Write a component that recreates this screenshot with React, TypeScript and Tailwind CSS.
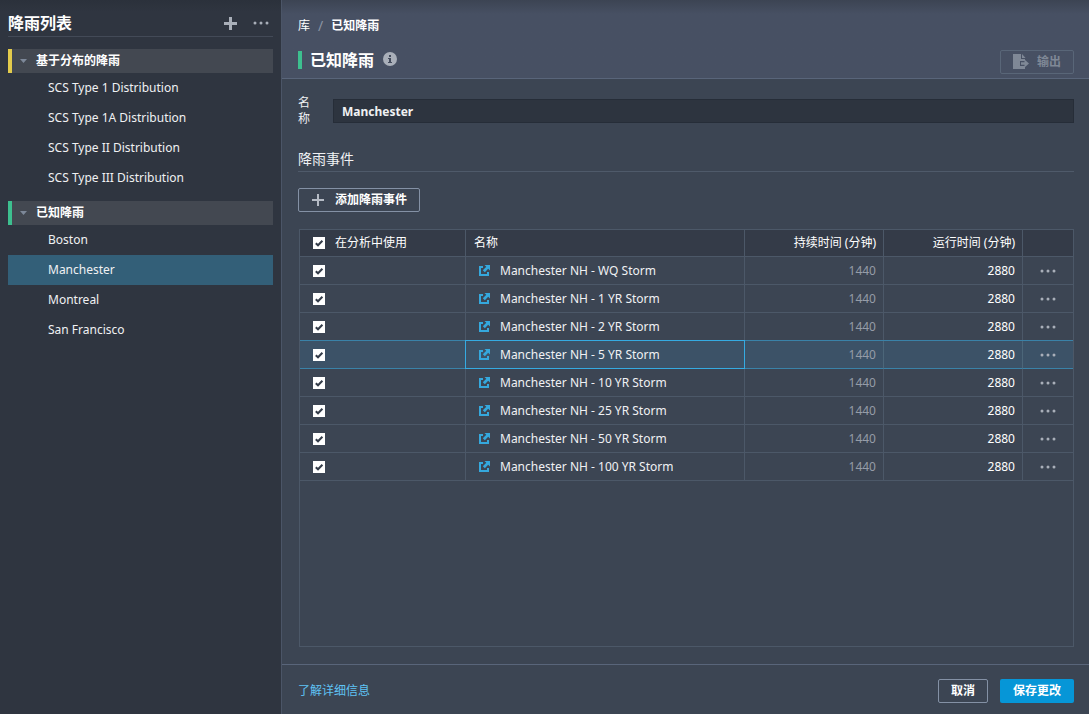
import React, { useState } from "react";

interface RainfallGroup {
  id: string;
  title: string;
  bar: string;
  items: string[];
}

interface RainfallEvent {
  id: number;
  name: string;
  duration: number;
  runtime: number;
}

const groups: RainfallGroup[] = [
  {
    id: "distribution",
    title: "基于分布的降雨",
    bar: "border-[#e3cb4c]",
    items: [
      "SCS Type 1 Distribution",
      "SCS Type 1A Distribution",
      "SCS Type II Distribution",
      "SCS Type III Distribution",
    ],
  },
  {
    id: "known",
    title: "已知降雨",
    bar: "border-[#3dbf8f]",
    items: ["Boston", "Manchester", "Montreal", "San Francisco"],
  },
];

const events: RainfallEvent[] = ["WQ", "1 YR", "2 YR", "5 YR", "10 YR", "25 YR", "50 YR", "100 YR"].map(
  (label, idx) => ({
    id: idx,
    name: `Manchester NH - ${label} Storm`,
    duration: 1440,
    runtime: 2880,
  })
);

const DotsIcon = ({ className }: { className?: string }) => (
  <svg width="16" height="4" viewBox="0 0 16 4" fill="currentColor" className={className} aria-hidden="true">
    <circle cx="2" cy="2" r="1.5" />
    <circle cx="8" cy="2" r="1.5" />
    <circle cx="14" cy="2" r="1.5" />
  </svg>
);

const OpenIcon = () => (
  <svg width="11" height="11" viewBox="0 0 11 11" className="shrink-0 text-[#35a8dd]" aria-hidden="true">
    <path d="M0 1H4V3H2V9H8V7H10V11H0Z" fill="currentColor" />
    <path d="M5.5 0H11V5.5L9.2 3.7L5.8 7.2L3.8 5.2L7.3 1.8Z" fill="currentColor" />
  </svg>
);

const ExportIcon = () => (
  <svg width="16" height="16" viewBox="0 0 16 16" fill="currentColor" aria-hidden="true">
    <path d="M0 0H8V5H12V7H7V12H12V15H0Z" />
    <path d="M9 0L12.5 4H9Z" />
    <path d="M8 8.2H11.5V5.5L16 9.5L11.5 13.5V10.8H8Z" />
  </svg>
);

interface CheckBoxProps {
  id: string;
  label: string;
  checked: boolean;
  onChange: () => void;
}

const CheckBox = ({ id, label, checked, onChange }: CheckBoxProps) => (
  <span className="relative block h-3 w-3 shrink-0">
    <input
      id={id}
      type="checkbox"
      aria-label={label}
      checked={checked}
      onChange={onChange}
      className="block h-3 w-3 cursor-pointer appearance-none bg-white"
    />
    {checked && (
      <svg viewBox="0 0 12 12" className="pointer-events-none absolute inset-0 h-3 w-3" aria-hidden="true">
        <path d="M2.8 6.2L5 8.3L9.4 3.7" fill="none" stroke="#343c49" strokeWidth="2" />
      </svg>
    )}
  </span>
);

const App: React.FC = () => {
  const [current, setCurrent] = useState("Manchester");
  const [closed, setClosed] = useState<string[]>([]);
  const [name, setName] = useState("Manchester");
  const [selectedRow, setSelectedRow] = useState(3);
  const [used, setUsed] = useState<number[]>(events.map((e) => e.id));

  const toggleGroup = (id: string) =>
    setClosed((prev) => (prev.includes(id) ? prev.filter((g) => g !== id) : [...prev, id]));

  const toggleUsed = (id: number) =>
    setUsed((prev) => (prev.includes(id) ? prev.filter((u) => u !== id) : [...prev, id]));

  const allUsed = used.length === events.length;

  return (
    <div className="flex h-screen bg-[#3c4553] font-['Noto_Sans','Noto_Sans_CJK_SC',sans-serif] text-xs text-[#f0f1f3]">
      {/* Sidebar */}
      <aside className="w-[282px] shrink-0 border-r border-[#4b5567] bg-[#2f3540] bg-linear-to-b from-[#2b313b] to-[#2f3540] to-[12px] px-2">
        <div className="flex h-[37px] items-center border-b border-[#434a57] pt-2.5">
          <h1 className="flex-1 text-base font-bold text-white">降雨列表</h1>
          <button aria-label="添加" className="mr-4 text-[#a9afb9]">
            <svg width="13" height="13" viewBox="0 0 13 13" fill="currentColor">
              <path d="M5 0H8V5H13V8H8V13H5V8H0V5H5Z" />
            </svg>
          </button>
          <button aria-label="更多" className="mr-1 text-[#a9afb9]">
            <DotsIcon />
          </button>
        </div>

        <nav className="mt-3 flex flex-col gap-2">
          {groups.map((group) => (
            <section key={group.id}>
              <button
                onClick={() => toggleGroup(group.id)}
                className={`flex h-6 w-full items-center border-l-4 bg-[#434851] pl-2 font-bold text-white ${group.bar}`}
              >
                <svg width="7" height="4" viewBox="0 0 7 4" className="mr-[9px] text-[#7d8899]" aria-hidden="true">
                  <path d="M0 0H7L3.5 4Z" fill="currentColor" />
                </svg>
                {group.title}
              </button>
              {!closed.includes(group.id) && (
                <ul>
                  {group.items.map((item) => (
                    <li key={item}>
                      <button
                        onClick={() => setCurrent(item)}
                        className={`flex h-[30px] w-full items-center pl-10 ${
                          item === current ? "bg-[#335f78]" : "hover:bg-[#3a414d]"
                        }`}
                      >
                        {item}
                      </button>
                    </li>
                  ))}
                </ul>
              )}
            </section>
          ))}
        </nav>
      </aside>

      <main className="flex min-w-0 flex-1 flex-col">
        {/* Header */}
        <header className="border-b border-[#59657a] bg-linear-to-b from-[#3c4453] to-[#475063] to-[14px] pt-4 pr-[15px] pl-4">
          <div className="flex h-5 items-center">
            <a href="#" className="text-white">库</a>
            <span className="mx-2 text-sm text-[#8b94a3]">/</span>
            <span className="font-bold text-white">已知降雨</span>
          </div>
          <div className="mt-3 flex h-[30px] items-start justify-between">
            <div className="flex h-6 items-center">
              <span className="h-[18px] w-1 bg-[#3dbf8f]" />
              <h2 className="ml-2 text-base font-bold text-white">已知降雨</h2>
              <button aria-label="信息" className="ml-2 text-[#a9afb9]">
                <svg width="16" height="16" viewBox="0 0 16 16">
                  <circle cx="8" cy="7" r="7" fill="currentColor" />
                  <path d="M7 3H9V5H7ZM6 6H9V10H10V11H6V10H7V7H6Z" fill="#434b5c" />
                </svg>
              </button>
            </div>
            <button
              disabled
              className="mt-0.5 flex h-6 items-center gap-2 rounded-[2px] border border-[#596678] px-3 font-bold text-[#7f8896]"
            >
              <ExportIcon />
              输出
            </button>
          </div>
        </header>

        {/* Form */}
        <div className="flex min-h-0 flex-1 flex-col pt-4 pr-[15px] pb-[17px] pl-4">
          <div className="flex items-center">
            <label htmlFor="rain-name" className="mr-[23px] w-3 leading-4">
              名称
            </label>
            <input
              id="rain-name"
              value={name}
              onChange={(e) => setName(e.target.value)}
              className="h-6 min-w-0 flex-1 border border-[#262d38] bg-[#2d343f] px-2 font-bold text-[#f0f1f3] outline-none"
            />
          </div>

          <h3 className="mt-5 border-b border-[#4f5a6a] text-sm leading-6">降雨事件</h3>

          <button className="mt-4 flex h-6 items-center self-start rounded-[2px] border border-[#8491a5] px-3 font-bold text-white">
            <svg width="14" height="14" viewBox="0 0 14 14" className="mr-2.5 text-[#b5bbc5]" aria-hidden="true">
              <path d="M6 1H8V6H13V8H8V13H6V8H1V6H6Z" fill="currentColor" />
            </svg>
            添加降雨事件
          </button>

          <div className="ml-px mt-[17px] min-h-0 flex-1 overflow-auto border border-[#4c5868]">
            <table className="w-full table-fixed border-separate border-spacing-0">
              <colgroup>
                <col className="w-[166px]" />
                <col />
                <col className="w-[139px]" />
                <col className="w-[139px]" />
                <col className="w-[50px]" />
              </colgroup>
              <thead>
                <tr className="h-[27px] bg-[#343b48] *:border-b *:border-[#4c5868] *:p-0 *:font-normal *:text-white">
                  <th className="border-r">
                    <div className="flex items-center gap-2.5 pl-[13px]">
                      <CheckBox
                        id="use-all"
                        label="在分析中使用"
                        checked={allUsed}
                        onChange={() => setUsed(allUsed ? [] : events.map((e) => e.id))}
                      />
                      <label htmlFor="use-all">在分析中使用</label>
                    </div>
                  </th>
                  <th className="border-r">
                    <div className="pl-2 text-left">名称</div>
                  </th>
                  <th className="border-r">
                    <div className="pr-[7px] text-right">持续时间 (分钟)</div>
                  </th>
                  <th className="border-r">
                    <div className="pr-[7px] text-right">运行时间 (分钟)</div>
                  </th>
                  <th aria-label="操作" />
                </tr>
              </thead>
              <tbody>
                {events.map((event) => {
                  const selected = event.id === selectedRow;
                  const cell = selected
                    ? "border-b border-b-[#3a82a8] border-r-[#4c6679] shadow-[0_-1px_0_#3a82a8]"
                    : "border-b border-[#4c5868]";
                  const nameCell = selected
                    ? "border-b border-[#35abe2] shadow-[0_-1px_0_#35abe2,-1px_0_0_#35abe2,-1px_-1px_0_#35abe2]"
                    : "border-b border-[#4c5868]";
                  return (
                    <tr
                      key={event.id}
                      onClick={() => setSelectedRow(event.id)}
                      className={`h-7 ${selected ? "bg-[#3c5267]" : ""}`}
                    >
                      <td className={`border-r p-0 pl-[13px] ${cell}`}>
                        <CheckBox
                          id={`use-${event.id}`}
                          label={event.name}
                          checked={used.includes(event.id)}
                          onChange={() => toggleUsed(event.id)}
                        />
                      </td>
                      <td className={`border-r p-0 ${nameCell}`}>
                        <div className="flex items-center gap-2.5 pl-[13px]">
                          <OpenIcon />
                          <span className="truncate">{event.name}</span>
                        </div>
                      </td>
                      <td className={`border-r p-0 pr-[7px] text-right text-[#959ca7] ${cell}`}>{event.duration}</td>
                      <td className={`border-r p-0 pr-[7px] text-right text-white ${cell}`}>{event.runtime}</td>
                      <td className={`p-0 ${cell}`}>
                        <button aria-label="更多" className="mx-auto flex h-5 w-6 items-center justify-center text-[#a9afb9]">
                          <DotsIcon />
                        </button>
                      </td>
                    </tr>
                  );
                })}
              </tbody>
            </table>
          </div>
        </div>

        {/* Footer */}
        <footer className="flex h-[50px] items-center gap-3 border-t border-[#59657a] pt-0.5 pr-[15px] pl-4">
          <a href="#" className="mr-auto text-[#5fc3f5]">
            了解详细信息
          </a>
          <button className="h-6 rounded-[2px] border border-[#8491a5] px-3 font-bold text-white">取消</button>
          <button className="h-6 rounded-[2px] bg-[#0696d7] px-[13px] font-bold text-white">保存更改</button>
        </footer>
      </main>
    </div>
  );
};

export default App;
